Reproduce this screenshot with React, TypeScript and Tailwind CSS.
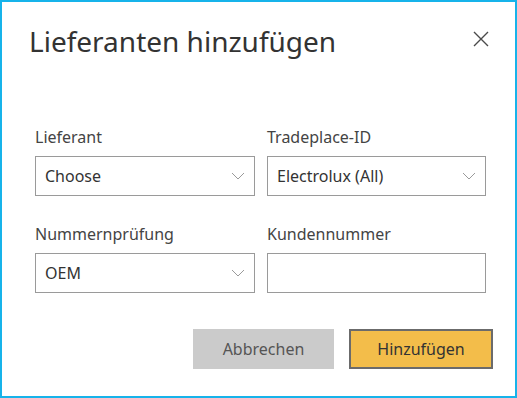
import React from "react";

const Chevron = () => (
  <svg width="14" height="8" viewBox="0 0 14 8" fill="none" className="shrink-0">
    <path d="M1 1 L7 7 L13 1" stroke="#9a9a9a" strokeWidth="1" />
  </svg>
);

const Select = ({ value }: { value: string }) => (
  <div className="flex h-[40px] items-center justify-between border border-[#9a9a9a] bg-white pl-[9px] pr-[9px] text-[16px] text-[#333]">
    <span>{value}</span>
    <Chevron />
  </div>
);

const Field = ({ label, children }: { label: string; children: React.ReactNode }) => (
  <div className="flex flex-col">
    <label className="mb-[8px] h-[22px] text-[16px] leading-[22px] text-[#444]">{label}</label>
    {children}
  </div>
);

export default function App() {
  return (
    <div
      className="flex h-[398px] w-[517px] flex-col border-2 border-[#16b3ea] bg-white"
      style={{ fontFamily: '"Noto Sans", "Open Sans", sans-serif' }}
    >
      <div className="flex items-start justify-between pl-[27px] pr-[25px] pt-[20px]">
        <h1 className="text-[28px] leading-[38px] text-[#333]">Lieferanten hinzufügen</h1>
        <button className="mt-[8px] text-[#444]" aria-label="close">
          <svg width="18" height="18" viewBox="0 0 18 18" fill="none">
            <path d="M2 2 L16 16 M16 2 L2 16" stroke="#4a4a4a" strokeWidth="1.4" />
          </svg>
        </button>
      </div>
      <div className="mt-[66px] grid grid-cols-[220px_219px] gap-x-[12px] gap-y-[27px] pl-[33px]">
        <Field label="Lieferant">
          <Select value="Choose" />
        </Field>
        <Field label="Tradeplace-ID">
          <Select value="Electrolux (All)" />
        </Field>
        <Field label="Nummernprüfung">
          <Select value="OEM" />
        </Field>
        <Field label="Kundennummer">
          <div className="h-[40px] border border-[#9a9a9a] bg-white" />
        </Field>
      </div>
      <div className="mt-[36px] flex justify-end gap-[15px] pr-[22px]">
        <button className="h-[40px] w-[141px] bg-[#cbcbcb] text-[16px] text-[#555]">Abbrechen</button>
        <button className="h-[40px] w-[144px] border-2 border-[#6b6b6b] bg-[#f3bd4a] text-[16px] text-[#333]">
          Hinzufügen
        </button>
      </div>
    </div>
  );
}
